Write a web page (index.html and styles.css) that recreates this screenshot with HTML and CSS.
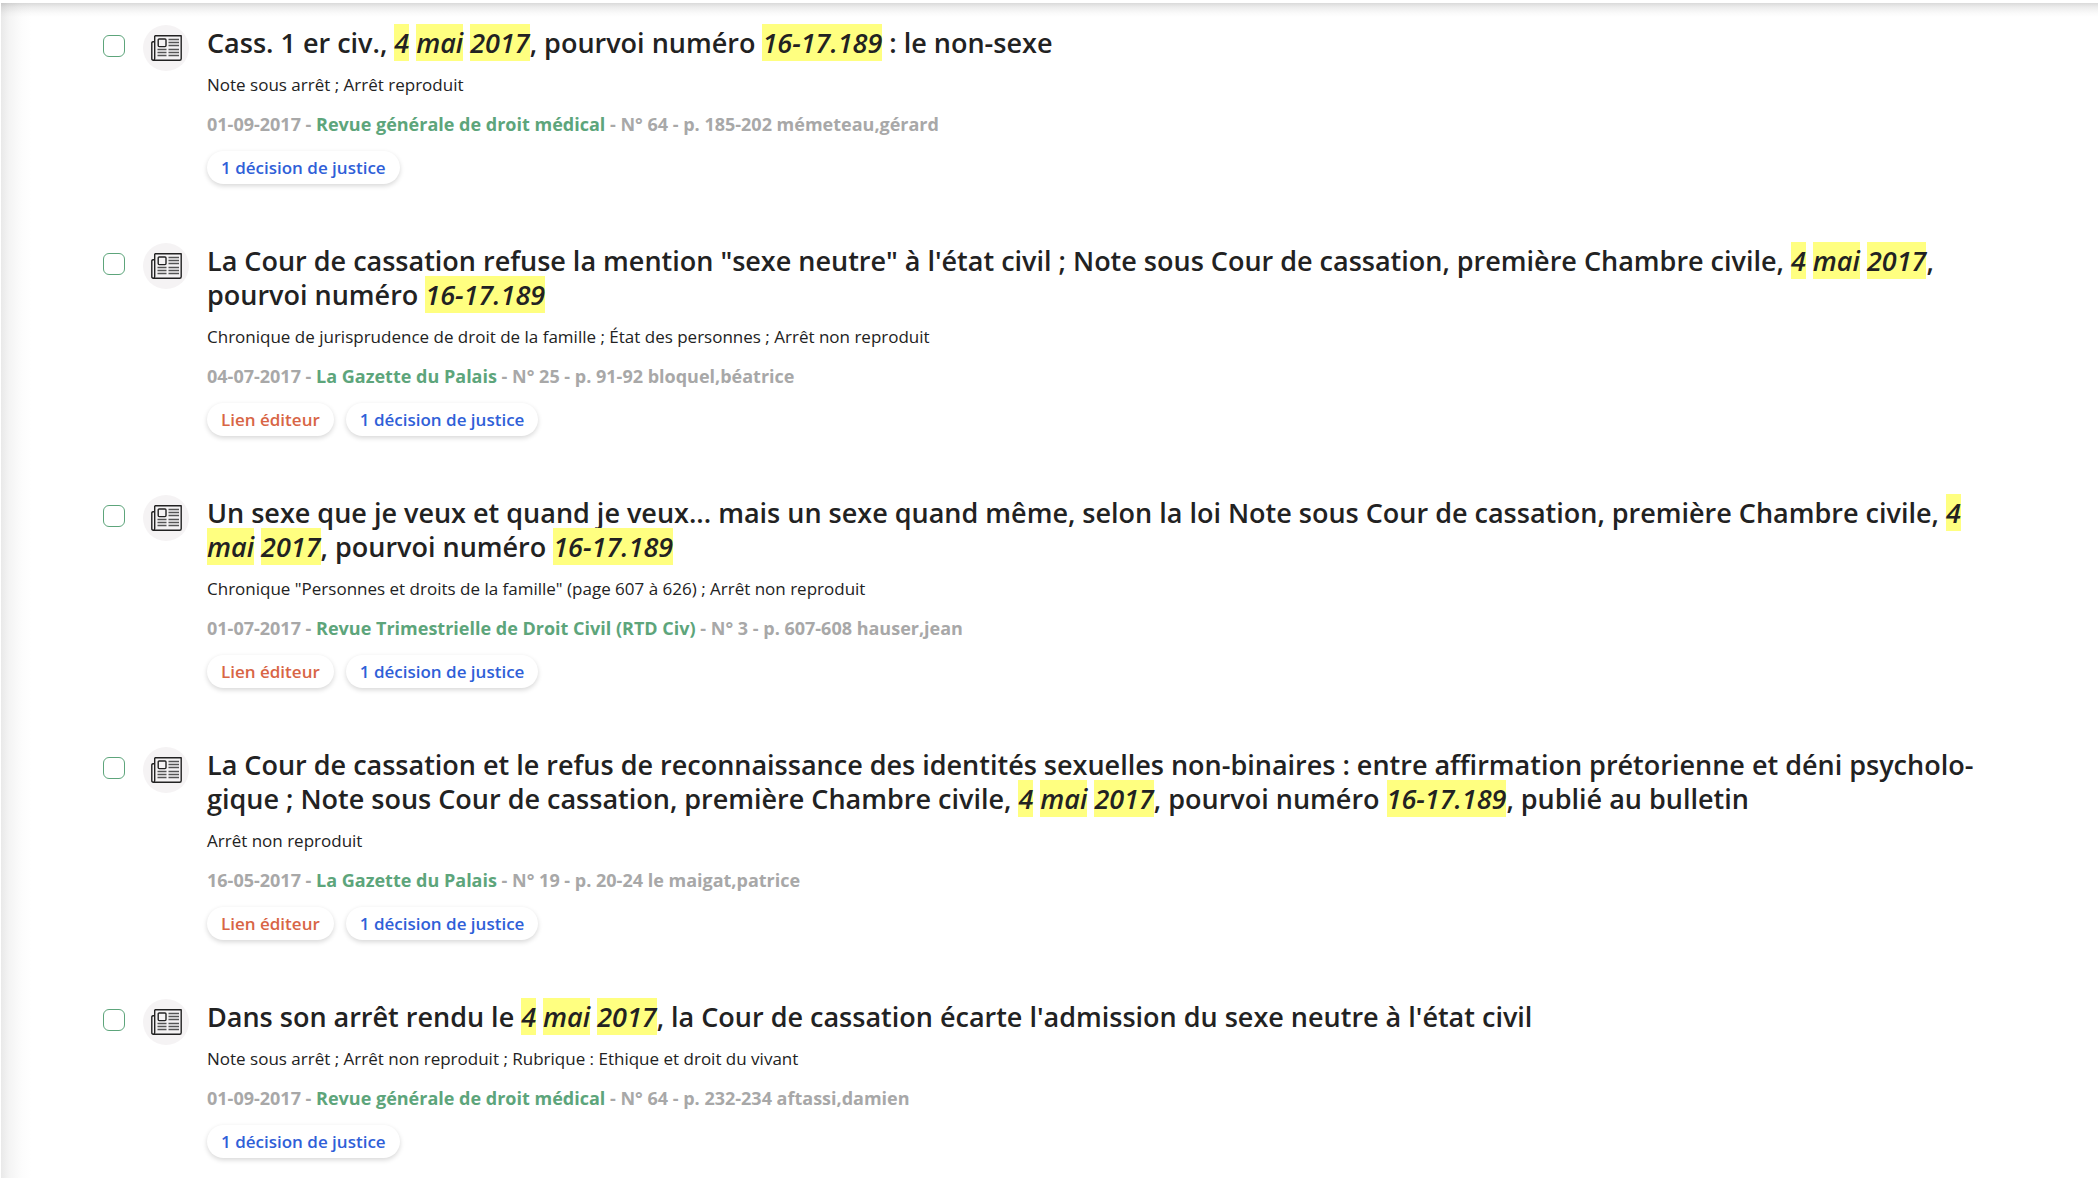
FILE: index.html
```html
<!DOCTYPE html>
<html lang="fr">
<head>
<meta charset="utf-8">
<title>Résultats de recherche</title>
<link rel="stylesheet" href="styles.css">
</head>
<body>
<svg class="sprite" aria-hidden="true">
  <symbol id="newspaper" viewBox="0 0 31 26">
    <g fill="none" stroke="#222" stroke-width="1.4" stroke-linejoin="round">
      <path d="M3.700 .8H30.200V23.700Q30.200 25.200 28.700 25.200H2.300Q.8 25.200 .8 23.700V8Q.8 6.500 3.700 6.500M3.700 .8V23.500Q3.700 25.200 2.300 25.200"/>
      <rect x="7.200" y="4" width="7.800" height="7.600" rx="1"/>
      <path stroke="#555" stroke-width="1.300" d="M17.500 4.500H28M17.500 7.500H28M17.500 10.500H28M6.500 14.500H15.500M6.500 17.500H15.500M6.500 20.500H15.500M17.500 14.500H28M17.500 17.500H28M17.500 20.500H28"/>
    </g>
  </symbol>
</svg>
<main class="results">
  <article class="result">
    <input class="pick" type="checkbox" aria-label="Sélectionner le document 1">
    <span class="kind"><svg class="kind-icon" aria-hidden="true"><use href="#newspaper"/></svg></span>
    <div class="body">
      <h2 class="title">Cass. 1 er civ., <em>4</em> <em>mai</em> <em>2017</em>, pourvoi numéro <em>16-17.189</em> : le non-sexe</h2>
      <p class="note">Note sous arrêt ; Arrêt reproduit</p>
      <p class="source">01-09-2017 - <a href="#">Revue générale de droit médical</a> - N° 64 - p. 185-202 mémeteau,gérard</p>
      <div class="actions"><button class="pill" type="button">1 décision de justice</button></div>
    </div>
  </article>
  <article class="result">
    <input class="pick" type="checkbox" aria-label="Sélectionner le document 2">
    <span class="kind"><svg class="kind-icon" aria-hidden="true"><use href="#newspaper"/></svg></span>
    <div class="body">
      <h2 class="title">La Cour de cassation refuse la mention "sexe neutre" à l'état civil ; Note sous Cour de cassation, première Chambre civile, <em>4</em> <em>mai</em> <em>2017</em>, pourvoi numéro <em>16-17.189</em></h2>
      <p class="note">Chronique de jurisprudence de droit de la famille ; État des personnes ; Arrêt non reproduit</p>
      <p class="source">04-07-2017 - <a href="#">La Gazette du Palais</a> - N° 25 - p. 91-92 bloquel,béatrice</p>
      <div class="actions"><a class="pill pill-editor" href="#">Lien éditeur</a><button class="pill" type="button">1 décision de justice</button></div>
    </div>
  </article>
  <article class="result">
    <input class="pick" type="checkbox" aria-label="Sélectionner le document 3">
    <span class="kind"><svg class="kind-icon" aria-hidden="true"><use href="#newspaper"/></svg></span>
    <div class="body">
      <h2 class="title">Un sexe que je veux et quand je veux... mais un sexe quand même, selon la loi Note sous Cour de cassation, première Chambre civile, <em>4</em> <em>mai</em> <em>2017</em>, pourvoi numéro <em>16-17.189</em></h2>
      <p class="note">Chronique "Personnes et droits de la famille" (page 607 à 626) ; Arrêt non reproduit</p>
      <p class="source">01-07-2017 - <a href="#">Revue Trimestrielle de Droit Civil (RTD Civ)</a> - N° 3 - p. 607-608 hauser,jean</p>
      <div class="actions"><a class="pill pill-editor" href="#">Lien éditeur</a><button class="pill" type="button">1 décision de justice</button></div>
    </div>
  </article>
  <article class="result">
    <input class="pick" type="checkbox" aria-label="Sélectionner le document 4">
    <span class="kind"><svg class="kind-icon" aria-hidden="true"><use href="#newspaper"/></svg></span>
    <div class="body">
      <h2 class="title">La Cour de cassation et le refus de reconnaissance des identités sexuelles non-binaires : entre affirmation prétorienne et déni psycholo&shy;gique ; Note sous Cour de cassation, première Chambre civile, <em>4</em> <em>mai</em> <em>2017</em>, pourvoi numéro <em>16-17.189</em>, publié au bulletin</h2>
      <p class="note">Arrêt non reproduit</p>
      <p class="source">16-05-2017 - <a href="#">La Gazette du Palais</a> - N° 19 - p. 20-24 le maigat,patrice</p>
      <div class="actions"><a class="pill pill-editor" href="#">Lien éditeur</a><button class="pill" type="button">1 décision de justice</button></div>
    </div>
  </article>
  <article class="result">
    <input class="pick" type="checkbox" aria-label="Sélectionner le document 5">
    <span class="kind"><svg class="kind-icon" aria-hidden="true"><use href="#newspaper"/></svg></span>
    <div class="body">
      <h2 class="title">Dans son arrêt rendu le <em>4</em> <em>mai</em> <em>2017</em>, la Cour de cassation écarte l'admission du sexe neutre à l'état civil</h2>
      <p class="note">Note sous arrêt ; Arrêt non reproduit ; Rubrique : Ethique et droit du vivant</p>
      <p class="source">01-09-2017 - <a href="#">Revue générale de droit médical</a> - N° 64 - p. 232-234 aftassi,damien</p>
      <div class="actions"><button class="pill" type="button">1 décision de justice</button></div>
    </div>
  </article>
</main>
</body>
</html>
```
FILE: styles.css
```css
* { box-sizing: border-box; }

body {
  margin: 0;
  padding: 3px 0 0 1px;
  background: #fff;
  color: #222;
  font-family: "Open Sans", sans-serif;
}

.sprite { display: none; }

.results {
  display: flex;
  flex-direction: column;
  gap: 59px;
  min-height: calc(100vh - 3px);
  padding: 22px 120px 16px 102px;
  background:
    linear-gradient(to bottom, #dadada, #ececec 4px, #fafafa 10px, #fff 14px),
    linear-gradient(to right, #e9e9e9, #f4f4f4 8px, #fcfcfc 20px, #fff 30px),
    #fff;
  background-blend-mode: multiply;
}

.result {
  display: flex;
  align-items: flex-start;
}

.pick {
  appearance: none;
  flex: none;
  width: 22px;
  height: 22px;
  margin: 10px 18px 0 0;
  border: 1px solid #5da57b;
  border-radius: 6px;
  background: #fff;
}

.pick:checked { background: #5da57b; }

.kind {
  flex: none;
  display: flex;
  align-items: center;
  justify-content: center;
  width: 46px;
  height: 46px;
  margin-right: 18px;
  border-radius: 50%;
  background: #f5f3f4;
}

.kind-icon {
  width: 31px;
  height: 26px;
}

.body {
  flex: 1;
  min-width: 0;
  padding-top: 1px;
}

.title {
  margin: 0;
  font-size: 27px;
  font-weight: 600;
  line-height: 34px;
}

.title em { background: #ffff80; }

.note {
  margin: 13px 0 0;
  font-size: 17px;
  line-height: 24px;
}

.source {
  margin: 14px 0 0;
  color: #a8a8a8;
  font-size: 18px;
  font-weight: 700;
  line-height: 26px;
}

.source a {
  color: #5da57b;
  text-decoration: none;
}

.actions {
  display: flex;
  gap: 12px;
  margin-top: 14px;
}

.pill {
  padding: 0 14px;
  border: 0;
  border-radius: 17px;
  background: #fff;
  box-shadow: 0 2px 5px rgba(0, 0, 0, 0.16);
  color: #2f60d8;
  font-family: inherit;
  font-size: 17px;
  font-weight: 600;
  line-height: 33px;
  text-decoration: none;
}

.pill-editor { color: #d86545; }
```
